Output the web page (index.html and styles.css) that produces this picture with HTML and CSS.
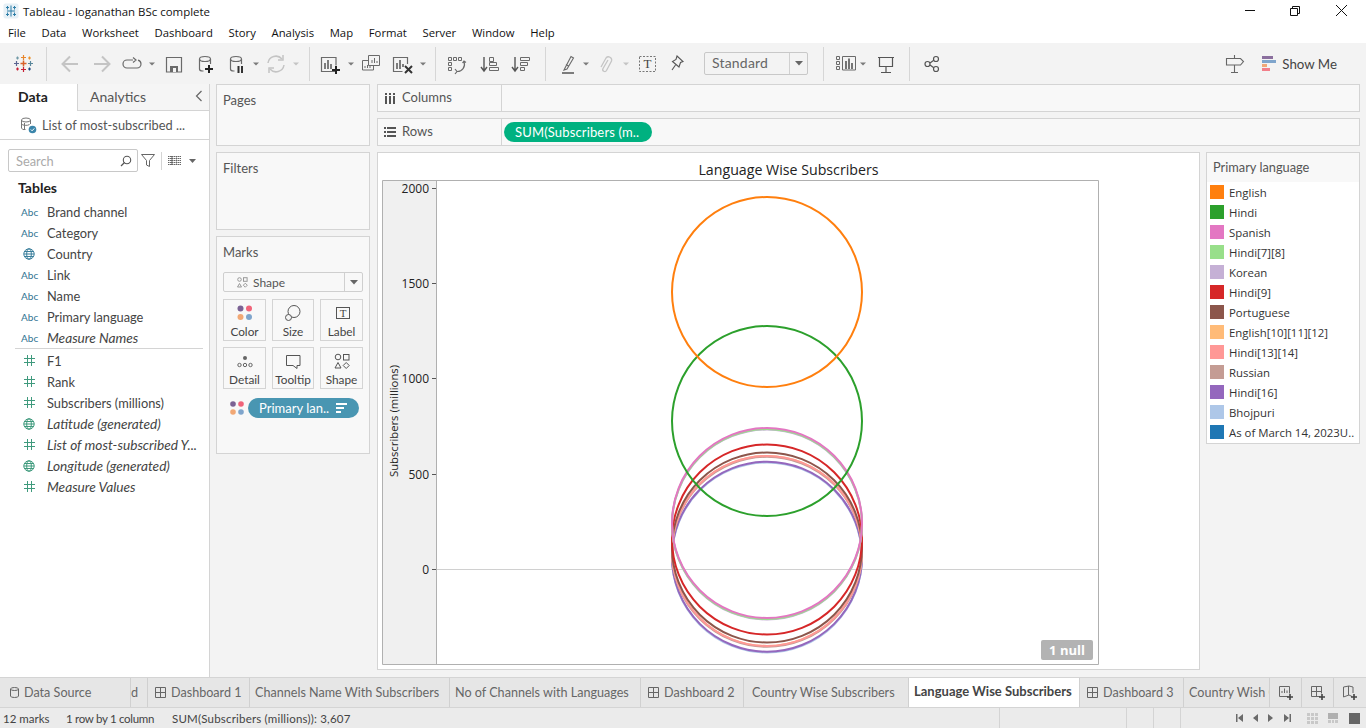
FILE: index.html
```html
<!DOCTYPE html>
<html lang="en">
<head>
<meta charset="utf-8">
<title>Tableau - loganathan BSc complete</title>
<link rel="stylesheet" href="styles.css">
</head>
<body>
<div class="app">
  <header class="titlebar">
    <svg class="app-icon" width="16" height="16" viewBox="0 0 16 16"><rect x="0.500" y="0.500" width="15" height="15" rx="2" fill="#e6f0f6"/><g stroke="#2f7fa8" stroke-width="1"><path d="M8 2.500v11M4 8h8M4.500 3v3.500M3 4.500h3M11.500 3v3.500M10 4.500h3M4.500 9.500V13M3 11.500h3M11.500 9.500V13M10 11.500h3"/></g></svg>
    <span class="title-text">Tableau - loganathan BSc complete</span>
    <svg class="winctl" width="136" height="22" viewBox="1230 0 136 22"><g fill="none" stroke="#111" stroke-width="1"><path d="M1245 10.500h10"/><path d="M1290.500 8.500h7v7h-7zM1292.500 8.500v-2h7v7h-2"/><path d="M1336 5l11 11M1347 5l-11 11"/></g></svg>
  </header>
  <nav class="menubar">
    <span>File</span><span>Data</span><span>Worksheet</span><span>Dashboard</span><span>Story</span><span>Analysis</span><span>Map</span><span>Format</span><span>Server</span><span>Window</span><span>Help</span>
  </nav>
  <div class="toolbar">
    <svg class="tb-first" width="30" height="41" viewBox="8 43 30 41"><g stroke-width="1.200" fill="none"><path d="M20.500 63.500h6M23.500 60.500v6" stroke="#d9622b" stroke-width="1.500"/><path d="M21 57.500h5M23.500 55v5" stroke="#e8862c"/><path d="M21 69.500h5M23.500 67v5" stroke="#c72035"/><path d="M14 63.500h5M16.500 61v5" stroke="#5b6591"/><path d="M28 63.500h5M30.500 61v5" stroke="#59879b"/><path d="M16 58h3M17.500 56.500v3" stroke="#7099a6"/><path d="M28 58h3M29.500 56.500v3" stroke="#eb912b"/><path d="M16 69h3M17.500 67.500v3" stroke="#c72035"/><path d="M28 69h3M29.500 67.500v3" stroke="#1f447e"/></g></svg>
    <i class="sep s1"></i>
    <svg width="31" height="41" viewBox="55 43 31 41"><path d="M78 64H63M70 56.500L62.500 64L70 71.500" fill="none" stroke="#c4c4c4" stroke-width="2"/></svg>
    <svg width="30" height="41" viewBox="86 43 30 41"><path d="M94 64h15M102 56.500L109.500 64L102 71.500" fill="none" stroke="#c4c4c4" stroke-width="2"/></svg>
    <svg width="30" height="41" viewBox="116 43 30 41"><path d="M133 60h-6a4 4 0 0 0 0 8h10a4 4 0 0 0 4-4a4 4 0 0 0-3-3.800M133 57.500l3 2.500l-3 2.500" fill="none" stroke="#6a6a6a" stroke-width="1.200"/></svg>
    <svg width="12" height="41" viewBox="146 43 12 41"><path d="M149 62.500h6l-3 3z" fill="#7a7a7a"/></svg>
    <svg width="31" height="41" viewBox="158 43 31 41"><path d="M166.500 57.500h15v14.500h-15z" fill="none" stroke="#6a6a6a" stroke-width="1.200"/><path d="M170 66h8v6h-8z" fill="#6a6a6a"/><path d="M173 68h3v4h-3z" fill="#f3f3f3"/></svg>
    <svg width="32" height="41" viewBox="189 43 32 41"><g fill="none" stroke="#6a6a6a" stroke-width="1.200"><ellipse cx="205" cy="59" rx="5.500" ry="2.500"/><path d="M199.500 59v10a3 2 0 0 0 3 2h1M210.500 59v5"/></g><path d="M209 65v8M205 69h8" stroke="#222" stroke-width="2"/></svg>
    <svg width="30" height="41" viewBox="221 43 30 41"><g fill="none" stroke="#6a6a6a" stroke-width="1.200"><ellipse cx="236" cy="59" rx="5.500" ry="2.500"/><path d="M230.500 59v10a3 2 0 0 0 3 2h1M241.500 59v5"/></g><path d="M238.500 66v7M242 66v7" stroke="#333" stroke-width="2"/></svg>
    <svg width="11" height="41" viewBox="251 43 11 41"><path d="M253 62.500h6l-3 3z" fill="#7a7a7a"/></svg>
    <svg width="28" height="41" viewBox="262 43 28 41"><g fill="none" stroke="#c4c4c4" stroke-width="1.500"><path d="M268 63a8 8 0 0 1 14-4M284 65a8 8 0 0 1-14 4"/><path d="M283 55v5h-5M269 73v-5h5"/></g></svg>
    <svg width="12" height="41" viewBox="290 43 12 41"><path d="M293 62.500h6l-3 3z" fill="#c4c4c4"/></svg>
    <i class="sep s2"></i>
    <svg width="30" height="41" viewBox="316 43 30 41"><path d="M336 71.500h-14.500v-14h14.500v8" fill="none" stroke="#6a6a6a" stroke-width="1.200"/><path d="M325 63v6M328 60v9M331 64v5" stroke="#555" stroke-width="1.500"/><path d="M336 66v8M332 70h8" stroke="#222" stroke-width="2"/></svg>
    <svg width="10" height="41" viewBox="346 43 10 41"><path d="M348 62.500h6l-3 3z" fill="#7a7a7a"/></svg>
    <svg width="30" height="41" viewBox="356 43 30 41"><g fill="none" stroke="#6a6a6a" stroke-width="1"><path d="M368.500 55.500h11v10h-11z"/><path d="M368 60.500h-5.500v9.500h11v-4"/><path d="M372 63v-3M374.500 63v-5M377 63v-2M365 68v-2M367.500 68v-3M370 68v-2"/></g></svg>
    <svg width="32" height="41" viewBox="386 43 32 41"><path d="M407.500 64v-6.500h-14v14h9" fill="none" stroke="#6a6a6a" stroke-width="1.200"/><path d="M397 63v6M400 60v9M403 64v3" stroke="#555" stroke-width="1.500"/><path d="M405 66l7 7M412 66l-7 7" stroke="#333" stroke-width="2"/></svg>
    <svg width="10" height="41" viewBox="418 43 10 41"><path d="M420 62.500h6l-3 3z" fill="#7a7a7a"/></svg>
    <i class="sep s3"></i>
    <svg width="31" height="41" viewBox="442 43 31 41"><g fill="none" stroke="#6a6a6a" stroke-width="1"><path d="M448.500 57.500h3v3h-3zM453.500 57.500h3v3h-3zM458.500 57.500h3v3h-3zM448.500 62.500h3v3h-3zM448.500 67.500h3v3h-3z"/><path d="M464 62a7 7 0 0 1-7 9.500M455 69l2 2.500l-2 2.500M462.500 63l1.500-2l2 1.500" stroke-width="1.200"/></g></svg>
    <svg width="33" height="41" viewBox="473 43 33 41"><path d="M484 57v13M481 67l3 4l3-4" fill="none" stroke="#555" stroke-width="1.400"/><path d="M489.500 57.500h4v4h-4zM489.500 62.500h7v3h-7zM489.500 67.500h9v3h-9z" fill="none" stroke="#6a6a6a"/></svg>
    <svg width="31" height="41" viewBox="506 43 31 41"><path d="M515 57v13M512 67l3 4l3-4" fill="none" stroke="#555" stroke-width="1.400"/><path d="M520.500 57.500h9v3h-9zM520.500 62.500h7v3h-7zM520.500 67.500h4v3h-4z" fill="none" stroke="#6a6a6a"/></svg>
    <i class="sep s4"></i>
    <svg width="28" height="41" viewBox="553 43 28 41"><path d="M565 68l-1 2l3-1l6.500-11l-2.500-1.500zM566 64.500l2.500 1.500" fill="none" stroke="#6a6a6a" stroke-width="1.100"/><path d="M562 73h12" stroke="#555" stroke-width="1.500"/></svg>
    <svg width="10" height="41" viewBox="581 43 10 41"><path d="M583 62.500h6l-3 3z" fill="#7a7a7a"/></svg>
    <svg width="30" height="41" viewBox="591 43 30 41"><path d="M608 60l-5 8.500a2 2 0 0 0 3.500 2l5-9.500a3.200 3.200 0 0 0-5.500-3l-5 9" fill="none" stroke="#c4c4c4" stroke-width="1.300"/></svg>
    <svg width="10" height="41" viewBox="621 43 10 41"><path d="M623 62.500h6l-3 3z" fill="#c4c4c4"/></svg>
    <svg width="33" height="41" viewBox="631 43 33 41"><rect x="639.500" y="56.500" width="16" height="15" fill="none" stroke="#777" stroke-dasharray="2 1.500"/><text x="647.500" y="68" class="svg-t" text-anchor="middle">T</text></svg>
    <svg width="27" height="41" viewBox="664 43 27 41"><path d="M677 56l6 5.500l-2.500 1l-1.500 4.500l-6.500-5.500l3.500-2zM675.500 65l-3.500 5" fill="none" stroke="#555" stroke-width="1.100"/></svg>
    <div class="select"><span class="select-text">Standard</span><span class="select-btn"><svg width="8" height="5" viewBox="0 0 8 5"><path d="M0 0h8L4 4.500z" fill="#666"/></svg></span></div>
    <i class="sep s5"></i>
    <svg width="20" height="41" viewBox="836 43 20 41"><g fill="none" stroke="#6a6a6a" stroke-width="1"><path d="M836.500 56.500h3v3h-3zM836.500 61.500h3v3h-3zM836.500 66.500h3v3h-3zM842.500 56.500h13v13.500h-13z"/></g><path d="M846 61v8M849 58.500v10.500M852 63v6" stroke="#555" stroke-width="1.600"/></svg>
    <svg width="14" height="41" viewBox="856 43 14 41"><path d="M860 62.500h6l-3 3z" fill="#7a7a7a"/></svg>
    <svg width="32" height="41" viewBox="870 43 32 41"><path d="M878 57.500h16M879.500 57.500v9h13v-9M886 66.500v6M881 72.500h10" fill="none" stroke="#555" stroke-width="1.200"/></svg>
    <i class="sep s6"></i>
    <svg width="24" height="41" viewBox="920 43 24 41"><g fill="none" stroke="#555" stroke-width="1.200"><circle cx="927.500" cy="64" r="2.500"/><circle cx="936" cy="59" r="2.500"/><circle cx="936" cy="69" r="2.500"/><path d="M930 63l3.800-2.800M930 65l3.800 2.800"/></g></svg>
    <div class="tb-right">
      <svg width="20" height="41" viewBox="1225 43 20 41"><path d="M1226.500 58.500h14l3 3l-3 3.500h-14zM1234.500 55v3.500M1234.500 65v7M1231 72.500h7" fill="none" stroke="#666" stroke-width="1.100"/></svg>
      <button class="showme">
        <svg width="14" height="15" viewBox="0 0 14 15"><path d="M0 0h11v3H0z" fill="#8b6f9e"/><path d="M0 4h14v3H0z" fill="#7fa5cc"/><path d="M0 8h5v3H0z" fill="#f0a878"/><path d="M0 12h8v3H0z" fill="#f27f8a"/></svg>
        <span>Show Me</span>
      </button>
    </div>
  </div>
  <main class="main">
    <aside class="data">
      <div class="data-tabs">
        <div class="dtab active">Data</div>
        <div class="dtab">Analytics<svg class="collapse" width="8" height="12" viewBox="0 0 8 12"><path d="M6.500 1L1.500 6l5 5" fill="none" stroke="#666" stroke-width="1.200"/></svg></div>
      </div>
      <div class="source">
        <svg width="17" height="17" viewBox="0 0 17 17"><g fill="none" stroke="#777" stroke-width="1"><ellipse cx="6" cy="3" rx="4.500" ry="2"/><path d="M1.500 3v8a3 2 0 0 0 4 1.500M10.500 3v4M1.500 7a4.500 2 0 0 0 8 .500"/><path d="M4.500 6v7"/></g><circle cx="12.500" cy="12.500" r="3.800" fill="#3b86ab"/><path d="M10.800 12.500l1.300 1.300l2.200-2.400" fill="none" stroke="#fff"/></svg>
        <span>List of most-subscribed ...</span>
      </div>
      <div class="search-row">
        <div class="search"><span>Search</span><svg width="12" height="12" viewBox="0 0 12 12"><circle cx="7" cy="5" r="3.700" fill="none" stroke="#555" stroke-width="1.100"/><path d="M4.500 7.500L1 11" stroke="#555" stroke-width="1.200"/></svg></div>
        <svg class="funnel" width="14" height="13" viewBox="0 0 14 13"><path d="M.500.500h13L8.500 6.500v6l-3-1.500v-4.500z" fill="none" stroke="#666"/></svg>
        <i class="search-sep"></i>
        <svg class="listicon" width="13" height="9" viewBox="0 0 13 9"><path d="M0 .500h13M0 2.500h13M0 4.500h13M0 6.500h13M0 8.500h13M3.500 0v9M4.500 0v9M8.500 0v9" stroke="#666" stroke-width="1" stroke-dasharray="1.500 .5"/></svg>
        <svg class="listcaret" width="7" height="4" viewBox="0 0 7 4"><path d="M0 0h7L3.500 4z" fill="#666"/></svg>
      </div>
      <h2 class="tables">Tables</h2>
      <ul class="fields">
        <li><span class="ty abc">Abc</span>Brand channel</li>
        <li><span class="ty abc">Abc</span>Category</li>
        <li><span class="ty"><svg width="12" height="12" viewBox="0 0 12 12"><use href="#globe"/></svg></span>Country</li>
        <li><span class="ty abc">Abc</span>Link</li>
        <li><span class="ty abc">Abc</span>Name</li>
        <li><span class="ty abc">Abc</span>Primary language</li>
        <li class="em"><span class="ty abc">Abc</span>Measure Names</li>
      </ul>
      <hr class="rule">
      <ul class="fields measures">
        <li><span class="ty"><svg class="hs" width="11" height="11" viewBox="0 0 11 11"><use href="#hash"/></svg></span>F1</li>
        <li><span class="ty"><svg class="hs" width="11" height="11" viewBox="0 0 11 11"><use href="#hash"/></svg></span>Rank</li>
        <li><span class="ty"><svg class="hs" width="11" height="11" viewBox="0 0 11 11"><use href="#hash"/></svg></span>Subscribers (millions)</li>
        <li class="em"><span class="ty"><svg class="geo" width="12" height="12" viewBox="0 0 12 12"><use href="#globe"/></svg></span>Latitude (generated)</li>
        <li class="em"><span class="ty"><svg class="hs" width="11" height="11" viewBox="0 0 11 11"><use href="#hash"/></svg></span>List of most-subscribed Y...</li>
        <li class="em"><span class="ty"><svg class="geo" width="12" height="12" viewBox="0 0 12 12"><use href="#globe"/></svg></span>Longitude (generated)</li>
        <li class="em"><span class="ty"><svg class="hs" width="11" height="11" viewBox="0 0 11 11"><use href="#hash"/></svg></span>Measure Values</li>
      </ul>
      <svg class="defs" width="0" height="0"><defs>
        <g id="globe" fill="none" stroke="currentColor" stroke-width="1"><circle cx="6" cy="6" r="5.200"/><ellipse cx="6" cy="6" rx="2.300" ry="5.200"/><path d="M.800 6h10.400M1.500 3.500h9M1.500 8.500h9"/></g>
        <path id="hash" d="M3.500 0v11M7.500 0v11M0 3.500h11M0 7.500h11" fill="none" stroke="#3f9a7d" stroke-width="1"/>
      </defs></svg>
    </aside>
    <section class="cards">
      <div class="card pages"><h3>Pages</h3></div>
      <div class="card filters"><h3>Filters</h3></div>
      <div class="card marks">
        <h3>Marks</h3>
        <div class="marktype">
          <span class="mt-label"><svg width="11" height="11" viewBox="0 0 11 11"><g fill="none" stroke="#999"><circle cx="2.500" cy="2.500" r="1.800"/><rect x="6.500" y=".700" width="3.600" height="3.600"/><path d="M2.500 6.500l2 3.500h-4z"/><path d="M8.300 6.200l2 2-2 2-2-2z"/></g></svg>Shape</span>
          <span class="mt-btn"><svg width="8" height="5" viewBox="0 0 8 5"><path d="M0 0h8L4 4.500z" fill="#666"/></svg></span>
        </div>
        <div class="markgrid">
          <div class="mbtn"><svg width="16" height="16" viewBox="0 0 16 16"><circle cx="3.500" cy="3.500" r="3" fill="#7b6294"/><circle cx="12" cy="3.500" r="3" fill="#f0647a"/><circle cx="3.500" cy="12" r="3" fill="#f2a875"/><circle cx="12" cy="12" r="3" fill="#7fa5cc"/></svg><span>Color</span></div>
          <div class="mbtn"><svg width="16" height="16" viewBox="0 0 16 16"><g fill="none" stroke="#555"><circle cx="9" cy="6.500" r="6"/><circle cx="3.500" cy="12.500" r="3" fill="#f5f5f5"/></g></svg><span>Size</span></div>
          <div class="mbtn"><svg width="16" height="16" viewBox="0 0 16 16"><rect x="2.500" y="2.500" width="13" height="11" fill="none" stroke="#555"/><text x="9" y="12" class="svg-t small" text-anchor="middle">T</text></svg><span>Label</span></div>
          <div class="mbtn"><svg width="16" height="16" viewBox="0 0 16 16"><circle cx="8" cy="5" r="2" fill="#666"/><g fill="none" stroke="#666"><circle cx="2.500" cy="12" r="1.700"/><circle cx="8" cy="12" r="1.700"/><circle cx="13.500" cy="12" r="1.700"/></g></svg><span>Detail</span></div>
          <div class="mbtn"><svg width="16" height="16" viewBox="0 0 16 16"><path d="M1.500 2.500h13.500v10h-3v3l-4-3h-6.500z" fill="none" stroke="#555"/></svg><span>Tooltip</span></div>
          <div class="mbtn"><svg width="16" height="16" viewBox="0 0 16 16"><g fill="none" stroke="#555"><circle cx="4" cy="4" r="2.800"/><rect x="9.500" y="1.500" width="5.500" height="5.500"/><path d="M4 9.500l3 5.500H1z"/><path d="M12.200 9.500l3 3-3 3-3-3z"/></g></svg><span>Shape</span></div>
        </div>
        <div class="pillrow">
          <svg width="14" height="14" viewBox="0 0 14 14"><circle cx="3" cy="3" r="2.800" fill="#7b6294"/><circle cx="11" cy="3" r="2.800" fill="#f0647a"/><circle cx="3" cy="11" r="2.800" fill="#f2a875"/><circle cx="11" cy="11" r="2.800" fill="#7fa5cc"/></svg>
          <div class="pill blue"><span>Primary lan..</span><svg width="11" height="10" viewBox="0 0 11 10"><path d="M0 0h11v2H0zM0 4h8v2H0zM0 8h5v2H0z" fill="#fff"/></svg></div>
        </div>
      </div>
    </section>
    <section class="work">
      <div class="shelf">
        <div class="shelf-head"><svg width="12" height="11" viewBox="0 0 12 11"><path d="M1 0h2v2H1zM5 0h2v2H5zM9 0h2v2H9zM1 3h2v8H1zM5 3h2v8H5zM9 3h2v8H9z" fill="#555"/></svg><span>Columns</span></div>
      </div>
      <div class="shelf">
        <div class="shelf-head"><svg width="12" height="10" viewBox="0 0 12 10"><path d="M0 0h2v2H0zM3 0h9v2H3zM0 4h2v2H0zM3 4h9v2H3zM0 8h2v2H0zM3 8h9v2H3z" fill="#555"/></svg><span>Rows</span></div>
        <div class="pill green">SUM(Subscribers (m..</div>
      </div>
      <div class="stage">
        <div class="viz">
          <div class="viz-title">Language Wise Subscribers</div>
          <svg class="plot" width="717" height="485" viewBox="382 180 717 485">
            <rect x="382.500" y="180.500" width="54" height="484" fill="#f0f0f0"/>
            <path d="M436 569.500h663" stroke="#d0d0d0"/>
            <path d="M382.500 664.500v-484h716v484zM436.500 180.500v484" fill="none" stroke="#b0b0b0"/>
            <path d="M432 188.500h4M432 283.500h4M432 378.500h4M432 474.500h4M432 569.500h4" stroke="#555"/>
            <g class="ticks" text-anchor="end">
              <text x="429" y="193">2000</text><text x="429" y="288">1500</text><text x="429" y="383">1000</text><text x="429" y="479">500</text><text x="429" y="574">0</text>
            </g>
            <text class="axis-title" transform="translate(398 421) rotate(-90)" text-anchor="middle">Subscribers (millions)</text>
            <g fill="none" stroke-width="2">
              <circle cx="767" cy="557.500" r="95" stroke="#aec7e8"/>
              <circle cx="767" cy="556.700" r="95" stroke="#9467bd"/>
              <circle cx="767" cy="551" r="95" stroke="#ffbb78"/>
              <circle cx="767" cy="551.800" r="95" stroke="#c49c94"/>
              <circle cx="767" cy="551" r="95" stroke="#ff9896"/>
              <circle cx="767" cy="547.500" r="95" stroke="#8c564b"/>
              <circle cx="767" cy="539.500" r="95" stroke="#d62728"/>
              <circle cx="767" cy="524.500" r="95" stroke="#c5b0d5"/>
              <circle cx="767" cy="524" r="95" stroke="#98df8a"/>
              <circle cx="767" cy="523" r="95" stroke="#e377c2"/>
              <circle cx="767" cy="421" r="95" stroke="#2ca02c"/>
              <circle cx="767" cy="292" r="95" stroke="#ff7f0e"/>
            </g>
          </svg>
          <div class="nullbadge">1 null</div>
        </div>
        <aside class="legend">
          <div class="legend-title">Primary language</div>
          <ul class="legend-list">
            <li><i class="sw c1"></i>English</li>
            <li><i class="sw c2"></i>Hindi</li>
            <li><i class="sw c3"></i>Spanish</li>
            <li><i class="sw c4"></i>Hindi[7][8]</li>
            <li><i class="sw c5"></i>Korean</li>
            <li><i class="sw c6"></i>Hindi[9]</li>
            <li><i class="sw c7"></i>Portuguese</li>
            <li><i class="sw c8"></i>English[10][11][12]</li>
            <li><i class="sw c9"></i>Hindi[13][14]</li>
            <li><i class="sw c10"></i>Russian</li>
            <li><i class="sw c11"></i>Hindi[16]</li>
            <li><i class="sw c12"></i>Bhojpuri</li>
            <li><i class="sw c13"></i>As of March 14, 2023U..</li>
          </ul>
        </aside>
      </div>
    </section>
  </main>
  <div class="tabs">
    <div class="tab t-src"><svg width="9" height="11" viewBox="0 0 9 11"><path d="M.500 2v7a4 1.500 0 0 0 8 0v-7a4 1.500 0 0 0-8 0a4 1.500 0 0 0 8 0" fill="none" stroke="#666"/></svg>Data Source</div>
    <div class="tab t-cut">d</div>
    <div class="tab t-d1"><svg width="11" height="11" viewBox="0 0 11 11"><use href="#dash"/></svg>Dashboard 1</div>
    <div class="tab t-cs">Channels Name With Subscribers</div>
    <div class="tab t-nc">No of Channels with Languages</div>
    <div class="tab t-d2"><svg width="11" height="11" viewBox="0 0 11 11"><use href="#dash"/></svg>Dashboard 2</div>
    <div class="tab t-cw">Country Wise Subscribers</div>
    <div class="tab t-lw active">Language Wise Subscribers</div>
    <div class="tab t-d3"><svg width="11" height="11" viewBox="0 0 11 11"><use href="#dash"/></svg>Dashboard 3</div>
    <div class="tab t-cf">Country Wish C</div>
    <div class="tab-add"><svg width="16" height="16" viewBox="0 0 16 16"><path d="M10.500 11.500h-9v-10h10v7M4 8V6M6.500 8V3.500M9 8V5.500" fill="none" stroke="#666"/><path d="M12 9v6M9 12h6" stroke="#444" stroke-width="1.600"/></svg></div>
    <div class="tab-add"><svg width="16" height="16" viewBox="0 0 16 16"><path d="M10.500 11.500h-9v-10h10v7M1.500 6.500h10M6.500 1.500v10" fill="none" stroke="#666"/><path d="M12 9v6M9 12h6" stroke="#444" stroke-width="1.600"/></svg></div>
    <div class="tab-add"><svg width="16" height="16" viewBox="0 0 16 16"><path d="M10 11.500l-3-1.500l-5.500 2v-10l5.500-1l4 1v6M6.500 1v9" fill="none" stroke="#666"/><path d="M12 9v6M9 12h6" stroke="#444" stroke-width="1.600"/></svg></div>
    <svg class="defs" width="0" height="0"><defs><path id="dash" d="M.500.500h10v10h-10zM.500 5.500h10M5.500.500v10" fill="none" stroke="#666"/></defs></svg>
  </div>
  <footer class="status">
    <div class="st-text"><span class="st-a">12 marks</span><span class="st-b">1 row by 1 column</span><span class="st-c">SUM(Subscribers (millions)): 3,607</span></div>
    <i class="st-cell w1"></i><i class="st-cell w2"></i><i class="st-cell w2"></i>
    <div class="st-end">
      <svg width="186" height="20" viewBox="1180 708 186 20">
        <g fill="#6a6a6a"><path d="M1236 714h1.500v8H1236zM1243 714v8l-5-4zM1258 714v8l-5-4zM1268 714l5 4l-5 4zM1284 714l5 4l-5 4zM1289.500 714h1.500v8h-1.500z"/></g>
        <g fill="#c8c8c8"><path d="M1307 713h3v3h-3zM1311 713h3v3h-3zM1315 713h3v3h-3zM1307 717h3v3h-3zM1311 717h3v3h-3zM1315 717h3v3h-3zM1307 721h3v3h-3zM1311 721h3v3h-3zM1315 721h3v3h-3z"/></g>
        <path d="M1328 713h10v6h-10z" fill="#b0b0b0"/><path d="M1328 720h3v3h-3zM1332 720h2v3h-2zM1335 720h3v3h-3z" fill="#c8c8c8"/>
        <path d="M1349 713h11v11h-11z" fill="#666"/>
      </svg>
    </div>
  </footer>
</div>
</body>
</html>
```
FILE: styles.css
```css
* { box-sizing: border-box; }
html, body { margin: 0; padding: 0; }
body { font-family: "Open Sans", "Liberation Sans", sans-serif; color: #333; background: #f3f3f3; overflow: hidden; }
ul { list-style: none; margin: 0; padding: 0; }
h2, h3 { margin: 0; font-weight: 400; }
svg { display: block; flex: none; }
.defs { position: absolute; }
.app { display: flex; flex-direction: column; width: 1366px; height: 728px; overflow: hidden; }

.titlebar { height: 22px; background: #fff; display: flex; align-items: center; padding-left: 3px; font-size: 11.450px; color: #111; }
.app-icon { margin-right: 4px; }
.title-text { flex: 1; }
.menubar { height: 21px; background: #fff; display: flex; align-items: center; gap: 15.700px; padding-left: 8px; font-size: 11.300px; color: #111; }

.toolbar { height: 41px; background: #f3f3f3; display: flex; align-items: center; }
.tb-first { margin-left: 8px; }
.sep { flex: none; display: block; width: 1px; height: 34px; background: #d6d6d6; }
.s1 { margin: 0 8px 0 8px; }
.s2 { margin: 0 6px 0 7px; }
.s3 { margin: 0 6px 0 7px; }
.s4 { margin: 0 7px 0 8px; }
.s5 { margin: 0 12px 0 15px; }
.s6 { margin: 0 10px 0 7px; }
.svg-t { font-family: "Liberation Serif", serif; font-size: 13px; fill: #444; }
.svg-t.small { font-size: 11px; }
.select { margin-left: 13px; width: 104px; height: 23px; border: 1px solid #c8c8c8; border-radius: 2px; display: flex; align-items: center; color: #555; background: #f3f3f3; }
.select-text { flex: 1; padding: 0 0 2px 7px; font-family: Lato, sans-serif; font-size: 14px; letter-spacing: .2px; color: #666; }
.select-btn { width: 18px; height: 100%; border-left: 1px solid #d0d0d0; display: flex; align-items: center; justify-content: center; }
.tb-right { margin-left: auto; display: flex; align-items: center; margin-right: 29px; }
.showme { display: flex; align-items: center; gap: 6px; margin-left: 17px; padding: 0; border: 0; background: none; font: 13.300px Lato, sans-serif; color: #444; }

.main { height: 593px; display: flex; }
.data { width: 210px; background: #fff; border-right: 1px solid #d4d4d4; flex: none; font-family: Lato, sans-serif; font-size: 12.800px; position: relative; }
.data-tabs { display: flex; height: 27px; }
.dtab { height: 27px; display: flex; align-items: center; font-size: 14px; color: #555; flex: 1; background: #f5f5f5; border-bottom: 1px solid #d4d4d4; border-left: 1px solid #d4d4d4; padding: 0 0 2px 12px; }
.dtab.active { flex: none; width: 77px; background: #fff; font-weight: 700; color: #222; border: 0; padding-left: 18px; }
.collapse { margin-left: auto; margin-right: 6px; }
.source { height: 29px; display: flex; align-items: center; gap: 5px; padding-left: 20px; border-bottom: 1px solid #d4d4d4; color: #555; }
.search-row { display: flex; align-items: center; margin: 9px 0 0 8px; height: 23px; }
.search { width: 130px; height: 23px; border: 1px solid #c8c8c8; border-radius: 2px; display: flex; align-items: center; justify-content: space-between; padding: 0 5px 0 7px; color: #aaa; background: #fff; }
.funnel { margin-left: 3px; }
.search-sep { display: block; width: 1px; height: 18px; background: #d4d4d4; margin-left: 6px; }
.listicon { margin-left: 6px; }
.listcaret { margin-left: 8px; }
.tables { font-size: 14px; font-weight: 700; color: #222; margin: 6px 0 0 18px; line-height: 20px; }
.fields { margin-top: 3px; }
.fields li { height: 21px; display: flex; align-items: center; color: #444; white-space: nowrap; }
.fields li.em { font-style: italic; font-size: 13.700px; }
.ty { width: 47px; padding-left: 21px; flex: none; font-size: 10px; letter-spacing: .1px; color: #2f7391; font-style: normal; display: flex; align-items: center; }
.ty svg { margin-left: 2px; color: #3b7f9c; }
.ty .geo { color: #3f9a7d; }
.ty .hs { margin-left: 3px; }
.rule { margin: 0 6px 0 15px; border: 0; height: 1px; background: #d4d4d4; }
.measures { margin-top: 1px; }

.cards { width: 154px; margin: 0 7px 0 6px; display: flex; flex-direction: column; gap: 6px; flex: none; font-family: Lato, sans-serif; font-size: 13px; }
.card { background: #f8f8f8; border: 1px solid #d4d4d4; padding: 7px 6px 0; color: #555; }
.pages { height: 62px; }
.filters { height: 78px; }
.marks { height: 218px; }
.card h3 { font-size: 13px; line-height: 16px; }
.marktype { margin-top: 12px; height: 20px; border: 1px solid #cfcfcf; border-radius: 2px; display: flex; align-items: center; font-size: 12px; color: #555; }
.mt-label { flex: 1; display: flex; align-items: center; gap: 5px; padding-left: 13px; }
.mt-btn { width: 18px; height: 100%; border-left: 1px solid #d0d0d0; display: flex; align-items: center; justify-content: center; }
.markgrid { display: grid; grid-template-columns: 43px 42px 43px; gap: 6px; margin-top: 7px; }
.mbtn { height: 42px; border: 1px solid #d4d4d4; display: flex; flex-direction: column; align-items: center; padding-top: 5px; gap: 3px; font-size: 11.800px; color: #444; line-height: 15px; background: #f8f8f8; }
.pillrow { display: flex; align-items: center; gap: 4px; margin: 9px 0 0 7px; }
.pill { display: flex; align-items: center; border-radius: 10px; color: #fff; height: 20px; font-size: 13px; }
.pill.blue { width: 111px; background: #4996b2; justify-content: space-between; padding: 0 12px 0 11px; }
.pill.green { width: 148px; background: #00b180; padding-left: 11px; margin: 3px 0 0 2px; letter-spacing: .15px; }

.work { flex: 1; display: flex; flex-direction: column; min-width: 0; padding-right: 6px; font-family: Lato, sans-serif; font-size: 13px; }
.shelf { height: 28px; margin-bottom: 6px; border: 1px solid #d4d4d4; background: #f8f8f8; display: flex; color: #555; }
.shelf-head { width: 124px; border-right: 1px solid #d4d4d4; flex: none; display: flex; align-items: center; gap: 6px; padding-left: 6px; }
.shelf-head span { padding-bottom: 2px; }
.stage { display: flex; gap: 6px; align-items: flex-start; }
.viz { position: relative; width: 823px; height: 518px; background: #fff; border: 1px solid #d4d4d4; padding-left: 4px; }
.viz-title { height: 27px; line-height: 34px; text-align: center; font-family: "Open Sans", sans-serif; font-size: 14.200px; color: #222; margin-left: -4px; }
.ticks text { font-family: "Open Sans", sans-serif; font-size: 12px; fill: #222; }
.axis-title { font-family: "Open Sans", sans-serif; font-size: 11.300px; fill: #222; }
.nullbadge { position: absolute; left: 663px; top: 487px; width: 52px; height: 20px; background: #b3b3b3; color: #fff; border-radius: 2px; font: 700 13px/20px "Open Sans", sans-serif; text-align: center; }
.legend { width: 154px; height: 292px; border: 1px solid #d4d4d4; background: #fff; font-family: "Open Sans", sans-serif; font-size: 11.400px; color: #333; }
.legend-title { height: 29px; line-height: 29px; padding-left: 6px; background: #f8f8f8; color: #555; font-family: Lato, sans-serif; font-size: 12.800px; }
.legend-list li { height: 20px; display: flex; align-items: center; white-space: nowrap; }
.sw { display: block; flex: none; width: 14px; height: 14px; margin: 0 5px 0 3px; }
.c1 { background: #ff7f0e; } .c2 { background: #2ca02c; } .c3 { background: #e377c2; } .c4 { background: #98df8a; }
.c5 { background: #c5b0d5; } .c6 { background: #d62728; } .c7 { background: #8c564b; } .c8 { background: #ffbb78; }
.c9 { background: #ff9896; } .c10 { background: #c49c94; } .c11 { background: #9467bd; } .c12 { background: #aec7e8; } .c13 { background: #1f77b4; }

.tabs { height: 31px; background: #e6e6e6; border-top: 1px solid #d4d4d4; border-bottom: 1px solid #d4d4d4; display: flex; font-family: Lato, sans-serif; font-size: 12.600px; color: #666; }
.tab { height: 100%; border-right: 1px solid #d0d0d0; display: flex; align-items: center; gap: 5px; padding: 0 0 1px 5px; flex: none; overflow: hidden; white-space: nowrap; }
.tab.active { background: #fff; color: #444; font-weight: 700; font-size: 13px; padding: 0 0 3px 5px; }
.t-src { width: 131px; padding-left: 10px; } .t-cut { width: 17px; padding-left: 0; } .t-d1 { width: 102px; padding-left: 7px; } .t-cs { width: 200px; } .t-nc { width: 191px; }
.t-d2 { width: 103px; padding-left: 7px; } .t-cw { width: 165px; padding-left: 8px; } .t-lw { width: 171px; } .t-d3 { width: 104px; padding-left: 7px; } .t-cf { width: 86px; }
.tab-add { width: 32px; flex: none; border-right: 1px solid #d0d0d0; display: flex; align-items: center; justify-content: center; }
.tab-add:last-of-type { border-right: 0; }

.status { height: 20px; background: #ebebeb; display: flex; font-family: Lato, sans-serif; font-size: 11.500px; color: #444; }
.st-text { width: 999px; flex: none; display: flex; align-items: center; padding-left: 3px; }
.st-a { width: 63px; } .st-b { width: 106px; letter-spacing: -.3px; } .st-c { letter-spacing: .2px; }
.st-cell { display: block; flex: none; border-left: 1px solid #d4d4d4; }
.w1 { width: 127px; } .w2 { width: 27px; }
.st-end { flex: none; width: 186px; border-left: 1px solid #d4d4d4; }
.st-end svg { margin-left: -1px; }
```
